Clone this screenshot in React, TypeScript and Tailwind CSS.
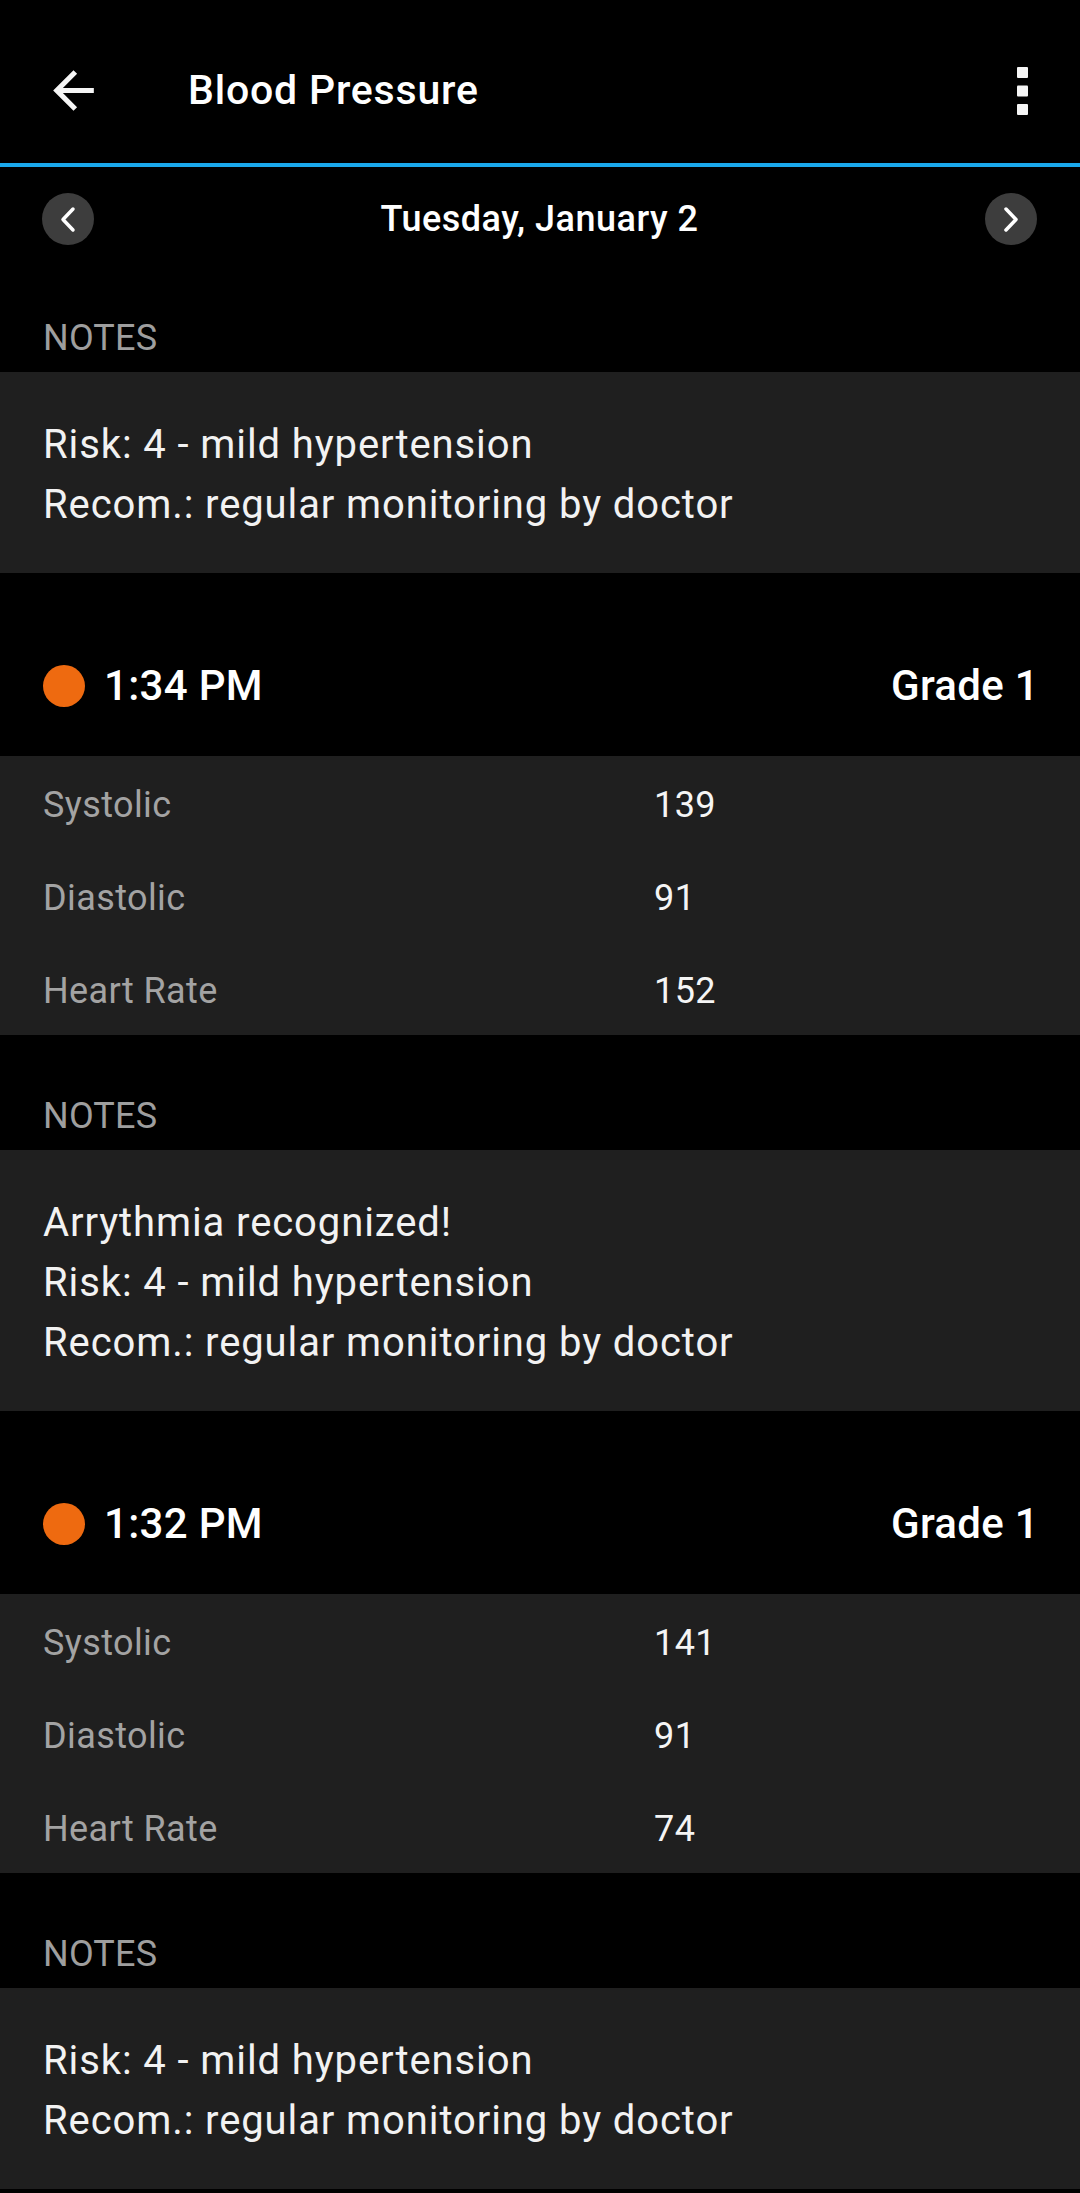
import React from "react";

type Reading = {
  time: string;
  grade: string;
  systolic: string;
  diastolic: string;
  heartRate: string;
  notes: string[];
};

const readings: Reading[] = [
  {
    time: "1:34 PM",
    grade: "Grade 1",
    systolic: "139",
    diastolic: "91",
    heartRate: "152",
    notes: [
      "Arrythmia recognized!",
      "Risk: 4 - mild hypertension",
      "Recom.: regular monitoring by doctor",
    ],
  },
  {
    time: "1:32 PM",
    grade: "Grade 1",
    systolic: "141",
    diastolic: "91",
    heartRate: "74",
    notes: ["Risk: 4 - mild hypertension", "Recom.: regular monitoring by doctor"],
  },
];

function NotesLabel({ first }: { first?: boolean }) {
  return (
    <div
      className={`${first ? "pt-[47px]" : "pt-[60px]"} pb-[13px] pl-[43px] text-[36px] leading-[42px] tracking-[0.2px] text-[#9e9e9e]`}
    >
      NOTES
    </div>
  );
}

function NotesBlock({ lines }: { lines: string[] }) {
  return (
    <div className="bg-[#1f1f1f] pl-[43px] pt-[43px] pb-[38px] text-[40px] leading-[60px] tracking-[0.9px] text-[#f2f2f2]">
      {lines.map((l) => (
        <div key={l}>{l}</div>
      ))}
    </div>
  );
}

function DataRow({ label, value }: { label: string; value: string }) {
  return (
    <div className="flex h-[93px] items-center pt-[4px] text-[36px] tracking-[0.4px]">
      <div className="w-[654px] pl-[43px] text-[#a3a3a3]">{label}</div>
      <div className="text-[#f5f5f5]">{value}</div>
    </div>
  );
}

function ReadingSection({ r }: { r: Reading }) {
  return (
    <>
      <div className="pt-[42px]">
        <div className="flex h-[141px] items-center">
          <div className="ml-[43px] h-[42px] w-[42px] rounded-full bg-[#ee6a10]" />
          <div className="ml-[19px] text-[42px] font-medium tracking-[0.3px] text-white">{r.time}</div>
          <div className="ml-auto mr-[41px] text-[42px] font-medium tracking-[0.3px] text-white">
            {r.grade}
          </div>
        </div>
      </div>
      <div className="bg-[#1f1f1f]">
        <DataRow label="Systolic" value={r.systolic} />
        <DataRow label="Diastolic" value={r.diastolic} />
        <DataRow label="Heart Rate" value={r.heartRate} />
      </div>
      <NotesLabel />
      <NotesBlock lines={r.notes} />
    </>
  );
}

function NavCircle({ dir }: { dir: "left" | "right" }) {
  return (
    <svg width="52" height="52" viewBox="0 0 52 52" className="shrink-0">
      <circle cx="26" cy="26" r="26" fill="#3d3d3d" />
      <polyline
        points={dir === "left" ? "31,16 21,26.5 31,37" : "21,16 31,26.5 21,37"}
        fill="none"
        stroke="#ffffff"
        strokeWidth="3.5"
        strokeLinecap="round"
        strokeLinejoin="round"
      />
    </svg>
  );
}

export default function App() {
  return (
    <div className="min-h-[2193px] w-[1080px] bg-black font-[Roboto,sans-serif] text-white">
      {/* Top app bar */}
      <div className="flex h-[163px] items-center pt-[18px]">
        <svg width="61" height="61" viewBox="0 0 24 24" className="ml-[43px] shrink-0">
          <path
            d="M20 11H7.83l5.59-5.59L12 4l-8 8 8 8 1.41-1.41L7.83 13H20v-2z"
            fill="#f5f5f5"
          />
        </svg>
        <div className="ml-[84px] text-[41px] font-medium tracking-[0.8px] text-white">
          Blood Pressure
        </div>
        <svg width="11" height="48" viewBox="0 0 11 48" className="ml-auto mr-[52px] shrink-0">
          <rect x="0" y="0" width="11" height="11" rx="1" fill="#f5f5f5" />
          <rect x="0" y="18.5" width="11" height="11" rx="1" fill="#f5f5f5" />
          <rect x="0" y="37" width="11" height="11" rx="1" fill="#f5f5f5" />
        </svg>
      </div>
      <div className="h-[4px] bg-[#1aa8ec]" />

      {/* Date navigation */}
      <div className="flex h-[103px] items-center">
        <div className="ml-[42px]">
          <NavCircle dir="left" />
        </div>
        <div className="flex-1 text-center text-[36px] font-medium tracking-[0.5px] text-white">
          Tuesday, January 2
        </div>
        <div className="mr-[43px]">
          <NavCircle dir="right" />
        </div>
      </div>

      <NotesLabel first />
      <NotesBlock lines={["Risk: 4 - mild hypertension", "Recom.: regular monitoring by doctor"]} />

      {readings.map((r) => (
        <ReadingSection key={r.time} r={r} />
      ))}
    </div>
  );
}
